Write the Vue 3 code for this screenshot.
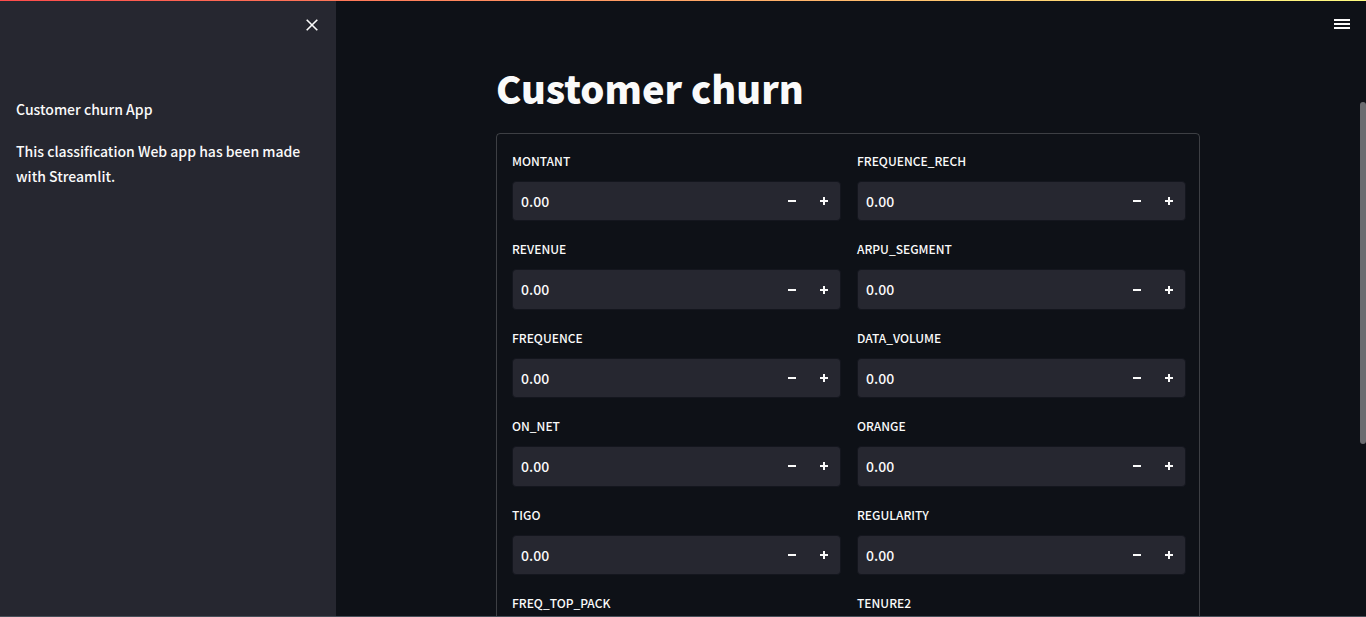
<script setup>
import { reactive } from 'vue'

const names = [
  'MONTANT', 'FREQUENCE_RECH',
  'REVENUE', 'ARPU_SEGMENT',
  'FREQUENCE', 'DATA_VOLUME',
  'ON_NET', 'ORANGE',
  'TIGO', 'REGULARITY',
  'FREQ_TOP_PACK', 'TENURE2',
]

const fields = reactive(names.map((name) => ({ name, value: '0.00' })))

function step(field, amount) {
  field.value = ((parseFloat(field.value) || 0) + amount).toFixed(2)
}
</script>

<template>
  <div class="app">
    <div class="decoration"></div>

    <aside class="sidebar">
      <button class="close" type="button" aria-label="Close sidebar">
        <svg width="12" height="12" viewBox="0 0 12 12" aria-hidden="true">
          <path d="M0.7 0.7 11.3 11.3M11.3 0.7 0.7 11.3" stroke="currentColor" stroke-width="1.6" fill="none" />
        </svg>
      </button>
      <p>Customer churn App</p>
      <p>This classification Web app has been made with Streamlit.</p>
    </aside>

    <main class="main">
      <button class="menu" type="button" aria-label="Main menu">
        <svg width="16" height="10" viewBox="0 0 16 10" aria-hidden="true">
          <path d="M0 1H16M0 5H16M0 9H16" stroke="currentColor" stroke-width="1.8" />
        </svg>
      </button>

      <div class="content">
        <h1>Customer churn</h1>
        <form class="form" @submit.prevent>
          <div v-for="field in fields" :key="field.name" class="field">
            <label :for="field.name">{{ field.name }}</label>
            <div class="number">
              <input :id="field.name" v-model="field.value" type="text" inputmode="decimal" />
              <button type="button" :aria-label="'Decrease ' + field.name" @click="step(field, -0.01)">
                <svg width="8" height="8" viewBox="0 0 8 8" aria-hidden="true">
                  <path d="M0 4H8" stroke="currentColor" stroke-width="2" />
                </svg>
              </button>
              <button type="button" :aria-label="'Increase ' + field.name" @click="step(field, 0.01)">
                <svg width="8" height="8" viewBox="0 0 8 8" aria-hidden="true">
                  <path d="M0 4H8M4 0V8" stroke="currentColor" stroke-width="2" />
                </svg>
              </button>
            </div>
          </div>
        </form>
      </div>
      <div class="thumb"></div>
    </main>
  </div>
</template>

<style>
body {
  margin: 0;
  background: #0e1117;
}
</style>

<style scoped>
.app {
  position: relative;
  display: flex;
  height: 100vh;
  box-sizing: border-box;
  overflow: hidden;
  border-bottom: 1px solid #48505a;
  background: #0e1117;
  color: #fafafa;
  font-family: "Noto Sans CJK SC", "Noto Sans", sans-serif;
  font-size: 14px;
  font-weight: 500;
}

.decoration {
  position: absolute;
  z-index: 2;
  top: 0;
  left: 0;
  right: 0;
  height: 1px;
  background: linear-gradient(90deg, #ff4b4b, #fffd80);
}

button {
  display: flex;
  align-items: center;
  justify-content: center;
  padding: 0;
  border: 0;
  background: none;
  color: inherit;
  cursor: pointer;
}

.sidebar {
  position: relative;
  flex: 0 0 336px;
  box-sizing: border-box;
  padding: 97px 16px 0;
  background: #262730;
}

.sidebar p {
  margin: 0 0 17px;
  line-height: 25px;
}

.close {
  position: absolute;
  top: 13px;
  right: 12px;
  width: 24px;
  height: 24px;
}

.main {
  position: relative;
  flex: 1;
  padding: 0 6px 0 0;
  overflow: hidden;
}

.menu {
  position: absolute;
  top: 12px;
  right: 12px;
  width: 24px;
  height: 24px;
}

.content {
  max-width: 704px;
  margin: 0 auto;
  padding: 64px 16px 0;
}

h1 {
  margin: 0 0 21px;
  font-size: 38px;
  font-weight: 900;
  line-height: 48px;
}

.form {
  display: grid;
  grid-template-columns: 1fr 1fr;
  gap: 16px;
  padding: 16px 13px 16px 15px;
  border: 1px solid rgba(250, 250, 250, 0.2);
  border-radius: 4px;
}

label {
  display: block;
  margin-bottom: 9px;
  font-size: 12px;
  line-height: 22px;
}

.number {
  display: flex;
  margin-bottom: 1px;
  border: 1px solid #14161e;
  border-radius: 4px;
  background: #262730;
}

.number input {
  flex: 1;
  min-width: 0;
  padding: 8px;
  border: 0;
  outline: 0;
  background: none;
  color: inherit;
  font: inherit;
  line-height: 1.6;
}

.number button {
  width: 32px;
}

.thumb {
  position: absolute;
  top: 102px;
  right: 0;
  width: 6px;
  height: 342px;
  border-radius: 3px;
  background: #6b6c70;
}
</style>
